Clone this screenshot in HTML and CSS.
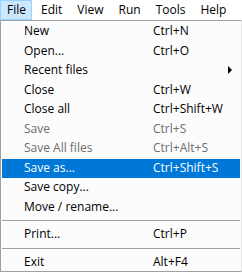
FILE: index.html
```html
<!DOCTYPE html>
<html lang="en">
<head>
    <meta charset="UTF-8">
    <title>File menu</title>
    <link rel="stylesheet" href="styles.css">
</head>
<body>
    <div class="menubar">
        <span class="menubar-item active">File</span>
        <span class="menubar-item">Edit</span>
        <span class="menubar-item">View</span>
        <span class="menubar-item">Run</span>
        <span class="menubar-item">Tools</span>
        <span class="menubar-item">Help</span>
    </div>
    <div class="menu">
        <div class="menu-item"><span class="label">New</span><span class="shortcut">Ctrl+N</span></div>
        <div class="menu-item"><span class="label">Open...</span><span class="shortcut">Ctrl+O</span></div>
        <div class="menu-item"><span class="label">Recent files</span><span class="submenu-arrow"></span></div>
        <div class="menu-item"><span class="label">Close</span><span class="shortcut">Ctrl+W</span></div>
        <div class="menu-item"><span class="label">Close all</span><span class="shortcut">Ctrl+Shift+W</span></div>
        <div class="menu-item disabled"><span class="label">Save</span><span class="shortcut">Ctrl+S</span></div>
        <div class="menu-item disabled"><span class="label">Save All files</span><span class="shortcut">Ctrl+Alt+S</span></div>
        <div class="menu-item selected"><span class="label">Save as...</span><span class="shortcut">Ctrl+Shift+S</span></div>
        <div class="menu-item"><span class="label">Save copy...</span></div>
        <div class="menu-item"><span class="label">Move / rename...</span></div>
        <div class="separator"></div>
        <div class="menu-item"><span class="label">Print...</span><span class="shortcut">Ctrl+P</span></div>
        <div class="separator"></div>
        <div class="menu-item"><span class="label">Exit</span><span class="shortcut">Alt+F4</span></div>
    </div>
</body>
</html>
```

FILE: styles.css
```css
body {
    margin: 0;
    font-family: 'Open Sans', 'Noto Sans', sans-serif;
    font-size: 12px;
    color: #000;
    background: #fff;
    width: 242px;
    height: 272px;
    overflow: hidden;
}

.menubar {
    display: flex;
    height: 20px;
    background: #fff;
}

.menubar-item {
    box-sizing: border-box;
    height: 20px;
    line-height: 18px;
    padding: 0 5px 0 6px;
    margin-right: 2px;
    border: 1px solid transparent;
}

.menubar-item.active {
    background: #cce8ff;
    border-color: #99d1ff;
}

.menu {
    box-sizing: border-box;
    width: 242px;
    height: 252px;
    border: 1px solid #a0a0a0;
    border-right-color: #e3e3e3;
    background: #fcfcfc;
    padding: 1px 1px;
}

.menu-item {
    display: flex;
    height: 19.5px;
    line-height: 18px;
    padding-left: 22px;
    position: relative;
}

.menu-item .label {
    width: 129px;
}

.menu-item.disabled {
    color: #6d6d6d;
}

.menu-item.selected {
    background: #0078d7;
    color: #fff;
}

.submenu-arrow {
    position: absolute;
    right: 8px;
    top: 5px;
    width: 0;
    height: 0;
    border-top: 4px solid transparent;
    border-bottom: 4px solid transparent;
    border-left: 4px solid #000;
}

.separator {
    height: 0;
    margin: 3px 0;
    border-top: 1px solid #a0a0a0;
    border-bottom: 1px solid #fff;
}
```
